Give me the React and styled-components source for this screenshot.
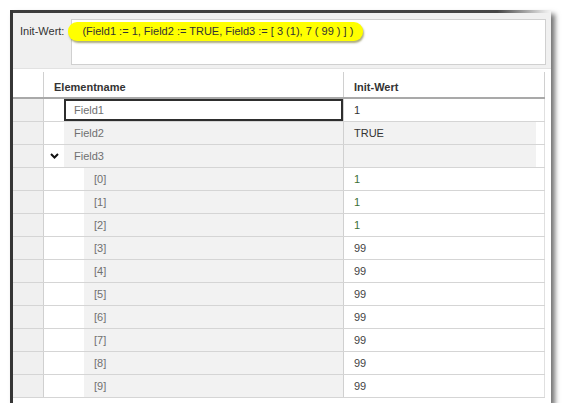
import React from 'react';
import styled, { createGlobalStyle } from 'styled-components';

const GlobalStyle = createGlobalStyle`
  body {
    margin: 0;
    background: #fff;
    font-family: "Liberation Sans", Arial, sans-serif;
    font-size: 11px;
  }
`;

const Page = styled.div`
  padding: 10px 0 0 10px;
`;

const Window = styled.div`
  width: 541px;
  height: 393px;
  box-sizing: border-box;
  border-left: 3px solid #363636;
  background: #fff;
  box-shadow: 4px 4px 5px rgba(0, 0, 0, 0.55);
  display: flex;
  flex-direction: column;
`;

const TopEdge = styled.div`
  height: 3px;
  background: linear-gradient(to right, #3c3c3c 0%, #454545 90%, #e6e6e6 99%, #f4f4f4 100%);
`;

const InitBar = styled.div`
  height: 56px;
  box-sizing: border-box;
  display: flex;
  align-items: flex-start;
  gap: 7px;
  padding: 6px 5px 3px 7px;
  background: #f0f0f0;
  border-bottom: 1px solid #e2e2e2;
`;

const Label = styled.span`
  margin-top: 6px;
  line-height: 13px;
  color: #333;
  white-space: nowrap;
`;

const TextBox = styled.div`
  flex: 1;
  height: 46px;
  box-sizing: border-box;
  position: relative;
  background: #fff;
  border: 1px solid #d0d0d0;
`;

const Bubble = styled.span`
  position: absolute;
  left: -4px;
  top: 2px;
  height: 19px;
  line-height: 19px;
  padding: 0 10px 0 14px;
  background: #ffff00;
  border-radius: 9px;
  box-shadow: 1px 2px 2px rgba(90, 90, 0, 0.5);
  color: #333;
  white-space: nowrap;
`;

const Table = styled.div`
  width: 532px;
`;

const HeaderRow = styled.div`
  display: flex;
  height: 30px;
  box-sizing: border-box;
  padding-top: 3px;
  border-bottom: 2px solid #a9a9a9;
`;

const HeadCell = styled.div`
  width: ${p => p.$w}px;
  box-sizing: border-box;
  border-right: 1px solid #d0d0d0;
  display: flex;
  align-items: flex-end;
  padding: 0 0 3px ${p => (p.$pad ? 10 : 0)}px;
  font-weight: bold;
  color: #333;
  line-height: 13px;
`;

const Row = styled.div`
  display: flex;
  height: 23px;
  box-sizing: border-box;
  border-bottom: 1px solid #d5d5d5;
`;

const RowHead = styled.div`
  width: 31px;
  box-sizing: border-box;
  background: #f0f0f0;
  border-right: 1px solid #d0d0d0;
`;

const NameCell = styled.div`
  width: 300px;
  box-sizing: border-box;
  display: flex;
  border-right: 1px solid #d0d0d0;
`;

const Indent = styled.div`
  width: ${p => p.$level * 20}px;
  display: flex;
  align-items: center;
  justify-content: center;
  background: #fff;
`;

const NameBody = styled.div`
  flex: 1;
  display: flex;
  align-items: center;
  box-sizing: border-box;
  padding-left: ${p => (p.$selected ? 8 : 10)}px;
  background: ${p => (p.$selected ? '#fff' : '#f2f2f2')};
  border: ${p => (p.$selected ? '2px solid #2e2e2e' : 'none')};
  color: #707070;
`;

const ValueCell = styled.div`
  width: 201px;
  box-sizing: border-box;
  display: flex;
  border-right: 1px solid #e0e0e0;
`;

const ValueBody = styled.div`
  flex: 1;
  display: flex;
  align-items: center;
  padding-left: 10px;
  margin-right: ${p => (p.$readonly ? 8 : 0)}px;
  background: ${p => (p.$readonly ? '#f2f2f2' : '#fff')};
  color: ${p => p.$color || '#444'};
`;

const Chevron = () => (
  <svg width="9" height="6" viewBox="0 0 9 6">
    <path d="M1 1 L4.5 4.5 L8 1" fill="none" stroke="#111" strokeWidth="2" />
  </svg>
);

const rows = [
  { name: 'Field1', value: '1', level: 1, selected: true, color: '#333' },
  { name: 'Field2', value: 'TRUE', level: 1, readonly: true, color: '#333' },
  { name: 'Field3', value: '', level: 1, readonly: true, open: true },
  { name: '[0]', value: '1', level: 2, color: '#3d6f35' },
  { name: '[1]', value: '1', level: 2, color: '#3d6f35' },
  { name: '[2]', value: '1', level: 2, color: '#3d6f35' },
  { name: '[3]', value: '99', level: 2 },
  { name: '[4]', value: '99', level: 2 },
  { name: '[5]', value: '99', level: 2 },
  { name: '[6]', value: '99', level: 2 },
  { name: '[7]', value: '99', level: 2 },
  { name: '[8]', value: '99', level: 2 },
  { name: '[9]', value: '99', level: 2 },
];

const App = () => {
  return (
    <Page>
      <GlobalStyle />
      <Window>
        <TopEdge />
        <InitBar>
          <Label>Init-Wert:</Label>
          <TextBox>
            <Bubble>(Field1 := 1, Field2 := TRUE, Field3 := [ 3 (1), 7 ( 99 ) ] )</Bubble>
          </TextBox>
        </InitBar>
        <Table>
          <HeaderRow>
            <HeadCell $w={31} />
            <HeadCell $w={300} $pad>Elementname</HeadCell>
            <HeadCell $w={201} $pad>Init-Wert</HeadCell>
          </HeaderRow>
          {rows.map(r => (
            <Row key={r.name}>
              <RowHead />
              <NameCell>
                <Indent $level={r.level}>{r.open && <Chevron />}</Indent>
                <NameBody $selected={r.selected}>{r.name}</NameBody>
              </NameCell>
              <ValueCell>
                <ValueBody $readonly={r.readonly} $color={r.color}>{r.value}</ValueBody>
              </ValueCell>
            </Row>
          ))}
        </Table>
      </Window>
    </Page>
  );
};

export default App;
